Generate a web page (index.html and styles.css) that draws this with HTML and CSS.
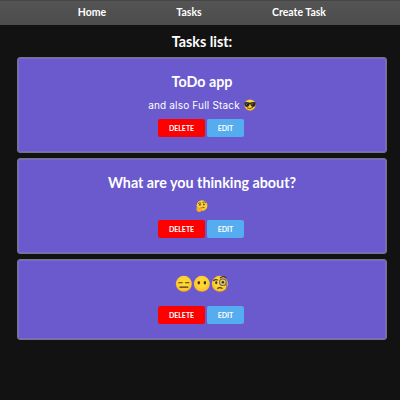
FILE: index.html
```
<!DOCTYPE html>
<html lang="en">
<head>
<meta charset="utf-8">
<title>Tasks</title>
<link rel="stylesheet" href="styles.css">
</head>
<body>
<svg class="defs" width="0" height="0" aria-hidden="true">
  <defs>
    <radialGradient id="face" cx=".5" cy=".42" r=".58">
      <stop offset=".45" stop-color="#fdd835"/>
      <stop offset=".85" stop-color="#fbc32b"/>
      <stop offset="1" stop-color="#ee9f24"/>
    </radialGradient>
  </defs>
</svg>
<nav class="nav">
  <a class="home">Home</a>
  <a class="tasks">Tasks</a>
  <a class="create">Create Task</a>
</nav>
<main>
  <h1>Tasks list:</h1>
  <section class="card">
    <h2>ToDo app</h2>
    <p><span class="text">and also Full Stack</span>
      <svg class="small" viewBox="0 0 32 32"><circle cx="16" cy="16" r="15" fill="url(#face)"/><path d="M1 9q7-2 15 1 8-3 15-1v4q-1 8-7 8-6 0-7-7h-2q-1 7-7 7-6 0-7-8z" fill="#29272a"/><path d="M5 12l5-1-5 6zM20 12l5-1-5 6z" fill="#77727a"/><path d="M9 24q7 4 14-1" fill="none" stroke="#513120" stroke-width="2.2" stroke-linecap="round"/></svg>
    </p>
    <div class="actions"><button class="delete">DELETE</button><button class="edit">EDIT</button></div>
  </section>
  <section class="card">
    <h2>What are you thinking about?</h2>
    <p>
      <svg class="small" viewBox="0 0 32 32"><circle cx="16" cy="15" r="14.5" fill="url(#face)"/><path d="M6 9q3-3 7-1M18 6q5-3 8 1" fill="none" stroke="#513120" stroke-width="2" stroke-linecap="round"/><ellipse cx="10.500" cy="12.500" rx="2" ry="2.600" fill="#422b21"/><ellipse cx="21" cy="12" rx="2" ry="2.600" fill="#422b21"/><path d="M13 21q5-3 9-1" fill="none" stroke="#513120" stroke-width="2" stroke-linecap="round"/><path d="M2 20q2-3 4 0v3l10-3q3 0 1 2l-4 2q3 4-1 7-6 2-9-2-3-4-1-9z" fill="#f7b52b" stroke="#d88a20"/></svg>
    </p>
    <div class="actions"><button class="delete">DELETE</button><button class="edit">EDIT</button></div>
  </section>
  <section class="card short">
    <div class="faces">
      <svg viewBox="0 0 32 32"><circle cx="16" cy="16" r="14.500" fill="url(#face)"/><path d="M7 14h6M19 14h6M9 22h14" fill="none" stroke="#513120" stroke-width="2.200" stroke-linecap="round"/></svg>
      <svg viewBox="0 0 32 32"><circle cx="16" cy="16" r="14.500" fill="url(#face)"/><ellipse cx="10.500" cy="14" rx="2.200" ry="3" fill="#422b21"/><ellipse cx="21.500" cy="14" rx="2.200" ry="3" fill="#422b21"/></svg>
      <svg viewBox="0 0 32 32"><circle cx="16" cy="16" r="14.500" fill="url(#face)"/><path d="M5 10q3-3 7-1M17 5q5-4 10 0M12 24q4-2 8 0" fill="none" stroke="#513120" stroke-width="2.200" stroke-linecap="round"/><ellipse cx="9.500" cy="14" rx="2" ry="2.700" fill="#422b21"/><circle cx="21.500" cy="13" r="6" fill="#e9c95d" stroke="#766d68" stroke-width="2"/><circle cx="21.500" cy="13" r="2.300" fill="#422b21"/><path d="M27.500 14q1 7 .5 15" fill="none" stroke="#766d68" stroke-width="1.500"/></svg>
    </div>
    <div class="actions"><button class="delete">DELETE</button><button class="edit">EDIT</button></div>
  </section>
</main>
</body>
</html>
```
FILE: styles.css
```
* { box-sizing: border-box; }
body { margin: 0; min-height: 400px; background: #121212; color: #fff; font-family: Lato, sans-serif; overflow: hidden; }
.defs { display: block; }
.nav { height: 25px; display: grid; grid-template-columns: 92px 97px 1fr; padding: 0 46px; border-top: 1px solid #454545; background: linear-gradient(#545454, #4c4c4c); text-align: center; font-weight: 700; font-size: 10.5px; line-height: 23px; }
.nav .tasks { padding-left: 5px; }
.nav .create { padding-left: 9px; }
main { padding: 0 13px 0 17px; }
h1, h2 { margin: 0; text-align: center; font-weight: 700; font-size: 14.3px; }
h1 { height: 32px; line-height: 34px; }
.card { height: 96px; margin-bottom: 5px; padding-top: 14px; border: 1px solid #77757d; border-radius: 3px; background: #6a5acd; box-shadow: inset 0 0 0 1px #7769cd; }
h2 { line-height: 19px; }
.card p { margin: 2px 0 0; height: 23px; display: flex; align-items: center; justify-content: center; gap: 4px; font: 10px Inter, sans-serif; }
.text { letter-spacing: .18px; }
.small { width: 12px; height: 12px; }
.actions { display: flex; justify-content: center; gap: 2px; margin: 3px 2px 0 0; }
button { height: 18px; border: 0; border-radius: 2px; padding: 0; color: #fff; font: 700 7px/18px Lato, sans-serif; }
.delete { width: 47px; background: #f00; }
.edit { width: 37px; background: #55acee; }
.short { height: 81px; }
.faces { height: 19px; display: flex; align-items: flex-end; justify-content: center; }
.faces svg { width: 17.700px; height: 17.700px; }
.short .actions { margin-top: 13px; }
```
